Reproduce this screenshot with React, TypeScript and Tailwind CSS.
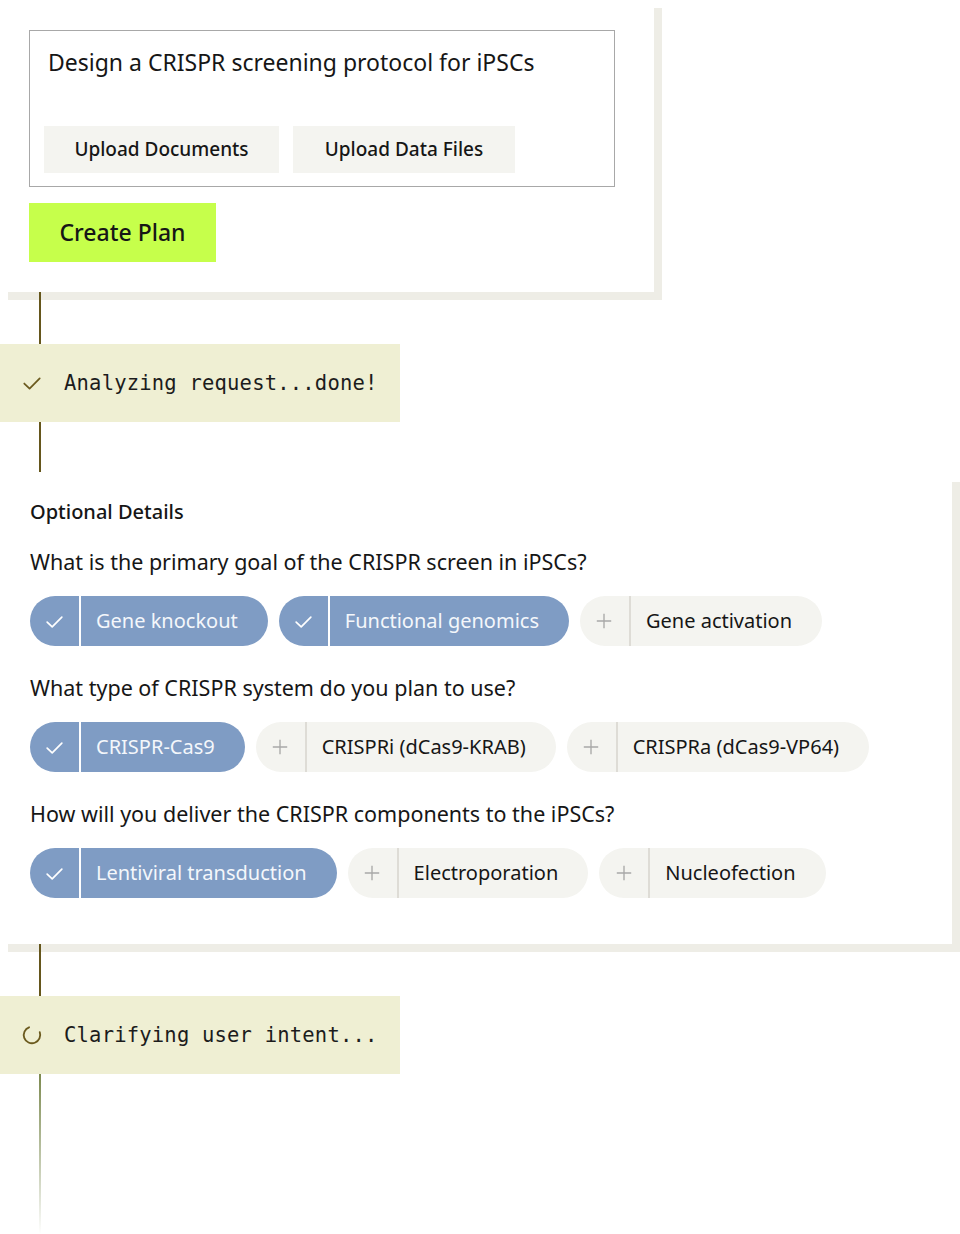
import React from 'react';

type Option = { label: string; selected: boolean };

const questions: { text: string; options: Option[] }[] = [
  {
    text: 'What is the primary goal of the CRISPR screen in iPSCs?',
    options: [
      { label: 'Gene knockout', selected: true },
      { label: 'Functional genomics', selected: true },
      { label: 'Gene activation', selected: false },
    ],
  },
  {
    text: 'What type of CRISPR system do you plan to use?',
    options: [
      { label: 'CRISPR-Cas9', selected: true },
      { label: 'CRISPRi (dCas9-KRAB)', selected: false },
      { label: 'CRISPRa (dCas9-VP64)', selected: false },
    ],
  },
  {
    text: 'How will you deliver the CRISPR components to the iPSCs?',
    options: [
      { label: 'Lentiviral transduction', selected: true },
      { label: 'Electroporation', selected: false },
      { label: 'Nucleofection', selected: false },
    ],
  },
];

const SANS = "font-['Noto_Sans','Roboto',sans-serif]";
const MONO = "font-['DejaVu_Sans_Mono','Liberation_Mono',monospace]";

const CheckIcon = ({ className }: { className?: string }) => (
  <svg viewBox="0 0 20 20" className={className} fill="none" stroke="currentColor" strokeWidth="1.6" strokeLinecap="round" strokeLinejoin="round">
    <path d="M3 10.5l4.8 4.6L17 5.8" />
  </svg>
);

const PlusIcon = ({ className }: { className?: string }) => (
  <svg viewBox="0 0 20 20" className={className} fill="none" stroke="currentColor" strokeWidth="1.5">
    <path d="M10 2v16M2 10h16" />
  </svg>
);

const Spinner = () => (
  <svg viewBox="0 0 24 24" className="w-[22px] h-[22px] text-[#6b5a1e]" fill="none" stroke="currentColor" strokeWidth="2">
    <circle cx="12" cy="12" r="9" strokeDasharray="42 15" transform="rotate(-20 12 12)" strokeLinecap="round" />
  </svg>
);

const Chip = ({ label, selected }: Option) => (
  <div
    className={`flex items-center h-[50px] rounded-full ${selected ? 'bg-[#7f9cc4] text-[#f4f7fb]' : 'bg-[#f4f4f0] text-[#161616]'}`}
  >
    <div className="w-[49px] flex justify-center">
      {selected ? <CheckIcon className="w-[21px] h-[21px] text-white" /> : <PlusIcon className="w-[18px] h-[18px] text-[#a8a8a8]" />}
    </div>
    <div className={`w-[2px] h-full ${selected ? 'bg-white' : 'bg-[#dedcd6]'}`} />
    <span className="pl-[15px] pr-[30px] text-[20px] leading-none">{label}</span>
  </div>
);

const Segment = ({ className }: { className?: string }) => <div className={`ml-[39px] w-[2px] ${className ?? ''}`} />;

const Status = ({ done, text }: { done: boolean; text: string }) => (
  <div className="w-[400px] h-[78px] bg-[#efefd3] flex items-center pl-[21px] gap-[21px]">
    {done ? <CheckIcon className="w-[22px] h-[22px] text-[#6b5a1e]" /> : <Spinner />}
    <span className={`${MONO} text-[20.5px] text-[#1c1c1c] tracking-[0.2px]`}>{text}</span>
  </div>
);

export default function App() {
  return (
    <div className={`${SANS} bg-white min-h-[1234px] overflow-hidden`}>
      {/* Prompt card */}
      <div className="w-[654px] h-[292px] bg-white shadow-[8px_8px_0_#eeede6] pt-[30px] pl-[29px]">
        <div className="w-[586px] h-[157px] border border-[#a8a8a8] flex flex-col justify-between pt-[15px] pb-[13px] px-[14px]">
          <p className="pl-[4px] text-[23px] leading-[32px] text-[#161616]">Design a CRISPR screening protocol for iPSCs</p>
          <div className="flex gap-[14px]">
            <button className="w-[235px] h-[47px] bg-[#f4f4f0] text-[19px] font-medium text-[#161616]">Upload Documents</button>
            <button className="w-[222px] h-[47px] bg-[#f4f4f0] text-[19px] font-medium text-[#161616]">Upload Data Files</button>
          </div>
        </div>
        <button className="mt-[16px] w-[187px] h-[59px] bg-[#c6ff4b] text-[23px] font-medium text-[#161616]">Create Plan</button>
      </div>

      <Segment className="h-[52px] bg-[#65561c]" />
      <Status done text="Analyzing request...done!" />
      <Segment className="h-[50px] bg-[#65561c]" />

      {/* Clarification card */}
      <div className="mt-[2px] w-[952px] h-[470px] bg-white shadow-[8px_8px_0_#eeede6] pl-[30px] pt-[24px]">
        <h2 className="text-[20px] leading-[28px] font-medium text-[#161616]">Optional Details</h2>
        {questions.map((q, i) => (
          <div key={i} className={i === 0 ? 'mt-[22px]' : 'mt-[28px]'}>
            <p className="text-[21.5px] leading-[28px] text-[#161616]">{q.text}</p>
            <div className="mt-[20px] flex gap-[11px]">
              {q.options.map((o) => (
                <Chip key={o.label} {...o} />
              ))}
            </div>
          </div>
        ))}
      </div>

      <Segment className="h-[52px] bg-[#65561c]" />
      <Status done={false} text="Clarifying user intent..." />
      <Segment className="h-[160px] bg-gradient-to-b from-[#7d8a4f] to-white" />
    </div>
  );
}
